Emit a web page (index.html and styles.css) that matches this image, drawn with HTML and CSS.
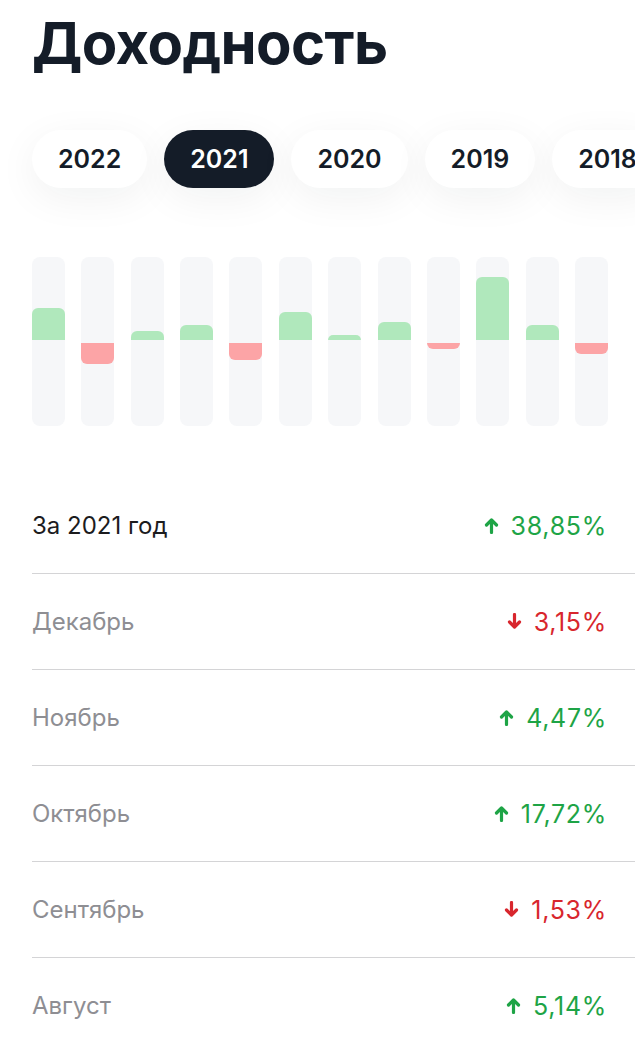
FILE: index.html
```html
<!DOCTYPE html>
<html lang="ru">
<head>
	<meta charset="UTF-8">
	<title>Доходность</title>
	<link rel="stylesheet" href="styles.css">
</head>
<body>
	<div class="page">
		<h1 class="title">Доходность</h1>

		<div class="years">
			<div class="year">2022</div>
			<div class="year active">2021</div>
			<div class="year">2020</div>
			<div class="year">2019</div>
			<div class="year">2018</div>
		</div>

		<!-- столбики по месяцам, январь..декабрь -->
		<div class="chart">
			<div class="col"><div class="half up"><div class="bar plus" style="height:32px"></div></div><div class="half down"></div></div>
			<div class="col"><div class="half up"></div><div class="half down"><div class="bar minus" style="height:21px"></div></div></div>
			<div class="col"><div class="half up"><div class="bar plus" style="height:9px"></div></div><div class="half down"></div></div>
			<div class="col"><div class="half up"><div class="bar plus" style="height:15px"></div></div><div class="half down"></div></div>
			<div class="col"><div class="half up"></div><div class="half down"><div class="bar minus" style="height:17px"></div></div></div>
			<div class="col"><div class="half up"><div class="bar plus" style="height:28px"></div></div><div class="half down"></div></div>
			<div class="col"><div class="half up"><div class="bar plus" style="height:5px"></div></div><div class="half down"></div></div>
			<div class="col"><div class="half up"><div class="bar plus" style="height:18px"></div></div><div class="half down"></div></div>
			<div class="col"><div class="half up"></div><div class="half down"><div class="bar minus" style="height:6px"></div></div></div>
			<div class="col"><div class="half up"><div class="bar plus" style="height:63px"></div></div><div class="half down"></div></div>
			<div class="col"><div class="half up"><div class="bar plus" style="height:15px"></div></div><div class="half down"></div></div>
			<div class="col"><div class="half up"></div><div class="half down"><div class="bar minus" style="height:11px"></div></div></div>
		</div>

		<ul class="list">
			<li class="row total">
				<span class="name">За 2021 год</span>
				<span class="val plus"><svg class="arr" viewBox="0 0 15 17"><path d="M7.5 15.5V3.5M2.5 8L7.5 3L12.5 8"/></svg>38,85%</span>
			</li>
			<li class="row">
				<span class="name">Декабрь</span>
				<span class="val minus"><svg class="arr" viewBox="0 0 15 17"><path d="M7.5 1.5V13.5M2.5 9L7.5 14L12.5 9"/></svg>3,15%</span>
			</li>
			<li class="row">
				<span class="name">Ноябрь</span>
				<span class="val plus"><svg class="arr" viewBox="0 0 15 17"><path d="M7.5 15.5V3.5M2.5 8L7.5 3L12.5 8"/></svg>4,47%</span>
			</li>
			<li class="row">
				<span class="name">Октябрь</span>
				<span class="val plus"><svg class="arr" viewBox="0 0 15 17"><path d="M7.5 15.5V3.5M2.5 8L7.5 3L12.5 8"/></svg>17,72%</span>
			</li>
			<li class="row">
				<span class="name">Сентябрь</span>
				<span class="val minus"><svg class="arr" viewBox="0 0 15 17"><path d="M7.5 1.5V13.5M2.5 9L7.5 14L12.5 9"/></svg>1,53%</span>
			</li>
			<li class="row">
				<span class="name">Август</span>
				<span class="val plus"><svg class="arr" viewBox="0 0 15 17"><path d="M7.5 15.5V3.5M2.5 8L7.5 3L12.5 8"/></svg>5,14%</span>
			</li>
		</ul>
	</div>
</body>
</html>
```

FILE: styles.css
```css
body{
	margin: 0;
	background: #fff;
	font-family: Inter, "Noto Sans", sans-serif;
	color: #141c28;
	overflow-x: hidden;
}
.page{
	padding-left: 32px;
}
.title{
	margin: 8px 0 0;
	font-size: 58px;
	line-height: 70px;
	font-weight: 700;
	letter-spacing: -0.6px;
	color: #141c28;
}

/* годы */
.years{
	display: flex;
	gap: 17px;
	margin-top: 52px;
	white-space: nowrap;
}
.year{
	flex: none;
	height: 58px;
	line-height: 58px;
	padding: 0 26px;
	border-radius: 29px;
	background: #fff;
	font-size: 25px;
	font-weight: 600;
	box-shadow: 0 10px 40px rgba(20,28,40,0.06);
}
.year.active{
	background: #141c28;
	color: #fff;
}

/* график */
.chart{
	display: grid;
	grid-template-columns: repeat(12, 33px);
	justify-content: space-between;
	width: 576px;
	margin-top: 69px;
}
.col{
	display: flex;
	flex-direction: column;
	gap: 3px;
	height: 169px;
	border-radius: 8px;
	background: #f6f7f9;
}
.half{
	display: flex;
	height: 83px;
}
.half.up{
	align-items: flex-end;
}
.half.down{
	align-items: flex-start;
}
.bar{
	width: 100%;
}
.bar.plus{
	background: #b0e8bc;
	border-radius: 6px 6px 0 0;
}
.bar.minus{
	background: #fca4a6;
	border-radius: 0 0 6px 6px;
}

/* список */
.list{
	list-style: none;
	margin: 52px 0 0;
	padding: 0;
}
.row{
	display: flex;
	justify-content: space-between;
	align-items: center;
	height: 95px;
	padding-right: 28px;
	border-bottom: 1px solid #d4d4d6;
}
.name{
	font-size: 24px;
	color: #8e8e93;
}
.total .name{
	color: #1c1c1e;
}
.val{
	display: flex;
	align-items: center;
	font-size: 25px;
	letter-spacing: 0.7px;
}
.val.plus{
	color: #1ea446;
}
.val.minus{
	color: #d8262d;
}
.arr{
	width: 15px;
	height: 17px;
	margin-right: 12px;
	fill: none;
	stroke: currentColor;
	stroke-width: 3.2;
	stroke-linecap: round;
	stroke-linejoin: round;
}
```
